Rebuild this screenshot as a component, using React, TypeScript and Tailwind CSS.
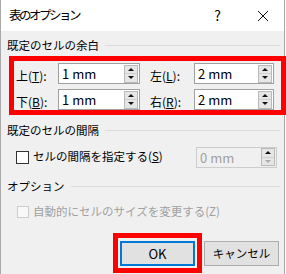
import React from 'react';

const font = { fontFamily: '"Noto Sans CJK JP", "Noto Sans", sans-serif' };

const Spinner: React.FC<{ disabled?: boolean }> = ({ disabled }) => (
  <div className="flex flex-col w-[14px] h-[18px] mr-[1px] border border-[#b9b9b9] bg-[#e6e6e6]">
    <div className="flex-1 flex items-center justify-center border-b border-[#cfcfcf]">
      <div className="w-0 h-0 border-l-[3px] border-r-[3px] border-b-[3px] border-l-transparent border-r-transparent border-b-[#111]" />
    </div>
    <div className="flex-1 flex items-center justify-center">
      <div className={`w-0 h-0 border-l-[3px] border-r-[3px] border-t-[3px] border-l-transparent border-r-transparent ${disabled ? 'border-t-[#aaa]' : 'border-t-[#111]'}`} />
    </div>
  </div>
);

const NumBox: React.FC<{ value: string; w: string; disabled?: boolean }> = ({ value, w, disabled }) => (
  <div className={`${w} h-[21px] flex items-center border ${disabled ? 'border-[#cccccc] bg-[#f0f0f0]' : 'border-[#a0a0a0] bg-white'}`}>
    <span className={`flex-1 pl-[3px] text-[13px] leading-none ${disabled ? 'text-[#a0a0a0]' : 'text-black'}`}>{value}</span>
    <Spinner disabled={disabled} />
  </div>
);

const Label: React.FC<{ ch: string; k: string }> = ({ ch, k }) => (
  <span className="text-[12px] leading-none text-black">
    {ch}(<span className="underline">{k}</span>):
  </span>
);

const Section: React.FC<{ title: string }> = ({ title }) => (
  <div className="flex items-center h-[15px] pl-[6px] pr-[4px]">
    <span className="text-[11.5px] leading-none text-black whitespace-nowrap">{title}</span>
    <div className="flex-1 ml-[6px] h-px bg-[#dcdcdc]" />
  </div>
);

export default function App() {
  return (
    <div className="w-[286px] h-[274px] bg-white overflow-hidden" style={font}>
      <div className="w-[285px] h-[274px] flex flex-col border-l border-r border-[#a9a9a9] bg-[#f0f0f0]">
        {/* title bar */}
        <div className="h-[31px] bg-white flex items-center pl-[8px] shrink-0">
          <span className="text-[12.5px] tracking-[-2.5px] text-black">表のオプション</span>
          <span className="ml-auto text-[14px] text-black mr-[36px]">?</span>
          <svg width="12" height="12" viewBox="0 0 12 12" className="mr-[15px]">
            <path d="M1 1 L11 11 M11 1 L1 11" stroke="#111" strokeWidth="1" />
          </svg>
        </div>

        <div className="pt-[7px]">
          <Section title="既定のセルの余白" />
        </div>

        {/* margins */}
        <div className="mt-[3px] ml-[8px] w-[277px] border-[5px] border-[#ff0000] pt-[2px] flex flex-col gap-[5px]">
          {[['上', 'T', '1 mm', '左', 'L', '2 mm'], ['下', 'B', '1 mm', '右', 'R', '2 mm']].map((r) => (
            <div key={r[0]} className="flex items-center h-[21px]">
              <div className="w-[44px] pl-[2px]"><Label ch={r[0]} k={r[1]} /></div>
              <NumBox value={r[2]} w="w-[82px]" />
              <div className="w-[54px] pl-[10px]"><Label ch={r[3]} k={r[4]} /></div>
              <NumBox value={r[5]} w="w-[80px]" />
            </div>
          ))}
        </div>

        <div className="pt-[8px]">
          <Section title="既定のセルの間隔" />
        </div>
        <div className="mt-[9px] flex items-center h-[20px] pl-[15px]">
          <div className="w-[13px] h-[13px] border border-[#333] bg-white" />
          <span className="ml-[4px] text-[11.5px] leading-none text-black">
            セルの間隔を指定する(<span className="underline">S</span>)
          </span>
          <div className="ml-auto mr-[7px]">
            <NumBox value="0 mm" w="w-[81px]" disabled />
          </div>
        </div>

        <div className="pt-[12px]">
          <Section title="オプション" />
        </div>
        <div className="mt-[11px] flex items-center h-[14px] pl-[16px]">
          <div className="w-[12px] h-[12px] border border-[#cccccc] bg-[#f8f8f8]" />
          <span className="ml-[4px] text-[11.5px] leading-none text-[#a0a0a0]">自動的にセルのサイズを変更する(Z)</span>
        </div>

        {/* buttons */}
        <div className="mt-[14px] flex items-center pl-[112px]">
          <div className="border-[5px] border-[#ff0000] p-[2px] bg-[#f0f0f0]">
            <button className="w-[75px] h-[25px] border-2 border-[#0078d7] bg-[#e1e1e1] text-[13px] text-black">OK</button>
          </div>
          <button className="ml-[2px] w-[75px] h-[25px] border border-[#adadad] bg-[#e1e1e1] text-[11.5px] text-black">キャンセル</button>
        </div>
      </div>
    </div>
  );
}
